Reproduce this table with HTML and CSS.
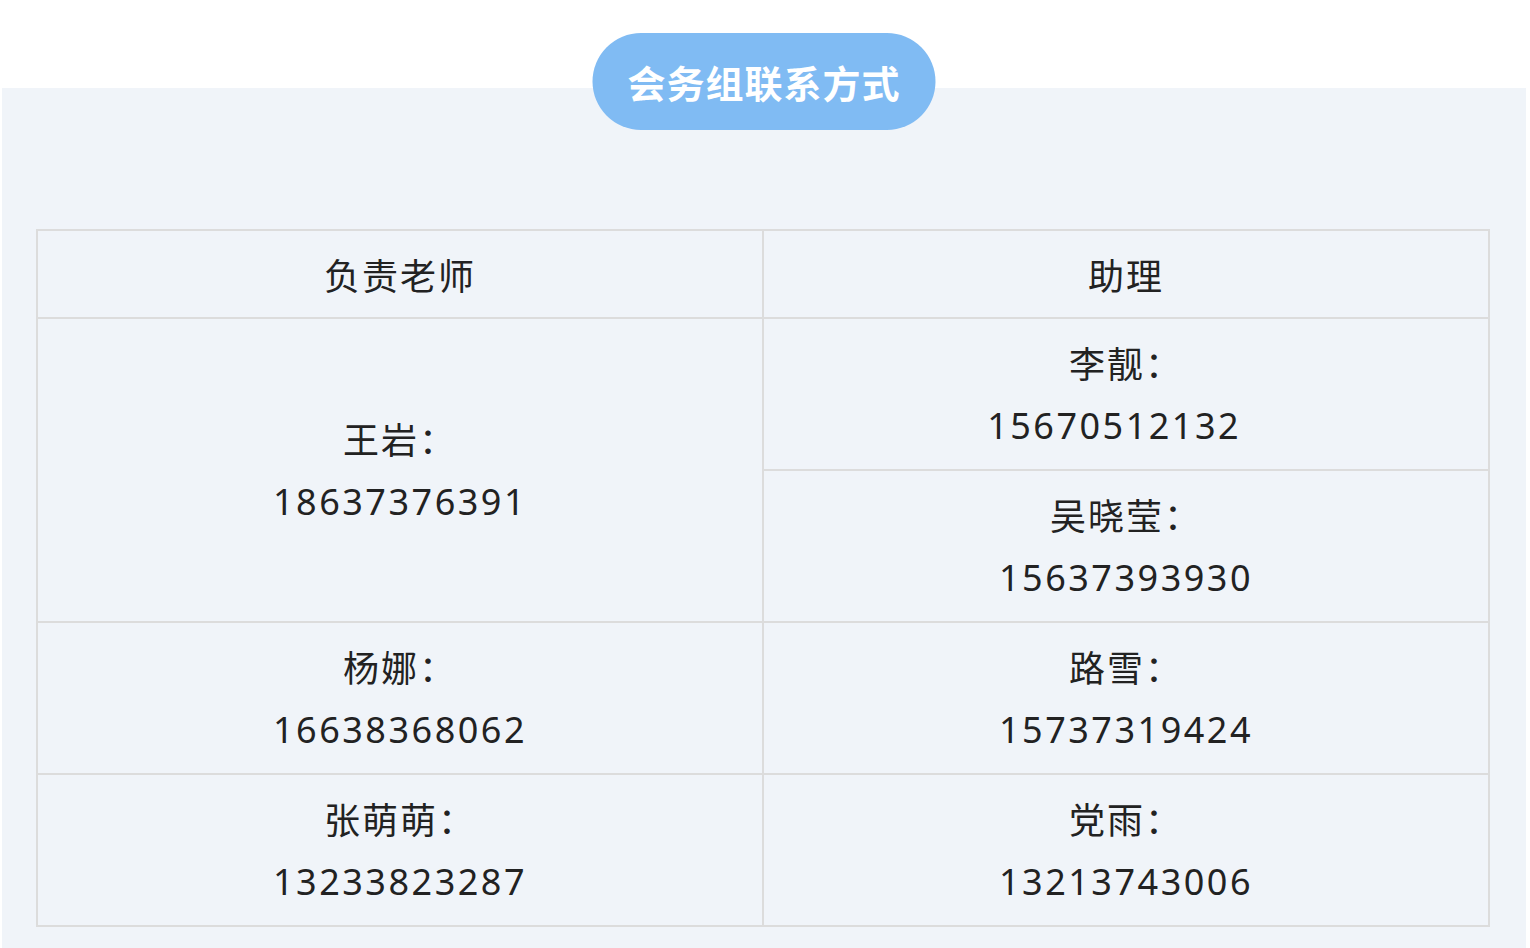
FILE: index.html
```html
<!DOCTYPE html>
<html lang="zh-CN">
<head>
<meta charset="utf-8">
<title>会务组联系方式</title>
<link rel="stylesheet" href="styles.css">
</head>
<body>
<section class="panel">
  <h2 class="pill">会务组联系方式</h2>
  <table class="contacts">
    <thead>
      <tr><th>负责老师</th><th>助理</th></tr>
    </thead>
    <tbody>
      <tr>
        <td rowspan="2"><p>王岩：</p><p class="num">18637376391</p></td>
        <td><p>李靓：</p><p class="num">15670512132&nbsp;&nbsp;</p></td>
      </tr>
      <tr>
        <td><p>吴晓莹：</p><p class="num">15637393930</p></td>
      </tr>
      <tr>
        <td><p>杨娜：</p><p class="num">16638368062</p></td>
        <td><p>路雪：</p><p class="num">15737319424</p></td>
      </tr>
      <tr>
        <td><p>张萌萌：</p><p class="num">13233823287</p></td>
        <td><p>党雨：</p><p class="num">13213743006</p></td>
      </tr>
    </tbody>
  </table>
</section>
</body>
</html>
```
FILE: styles.css
```css
html, body {
  margin: 0;
  padding: 0;
  background: #ffffff;
}
body {
  font-family: "Noto Sans CJK SC", "Noto Sans", sans-serif;
  color: #222222;
  padding-top: 88px;
  height: 860px;
  overflow: hidden;
}
.panel {
  position: relative;
  margin: 0 4px 0 2px;
  background: #f0f4f9;
  padding: 141px 36px 40px 34px;
}
.pill {
  position: absolute;
  top: -55px;
  left: 50%;
  transform: translateX(-50%);
  margin: 0;
  width: 343px;
  height: 97px;
  border-radius: 49px;
  background: #80bbf3;
  color: #ffffff;
  font-size: 38px;
  font-weight: 700;
  letter-spacing: 1px;
  display: flex;
  align-items: center;
  justify-content: center;
}
.contacts {
  width: 100%;
  border-collapse: collapse;
  table-layout: fixed;
  border: 2px solid #dcdcdc;
}
.contacts th,
.contacts td {
  border: 2px solid #dcdcdc;
  text-align: center;
  vertical-align: middle;
  font-size: 36px;
  letter-spacing: 2px;
  font-weight: 400;
  padding: 0;
}
.contacts th {
  height: 86px;
}
.contacts td {
  height: 150px;
}
.contacts p {
  margin: 0;
  line-height: 64px;
}
.contacts .num {
  font-family: "Noto Sans", sans-serif;
  letter-spacing: 2.5px;
}
```
